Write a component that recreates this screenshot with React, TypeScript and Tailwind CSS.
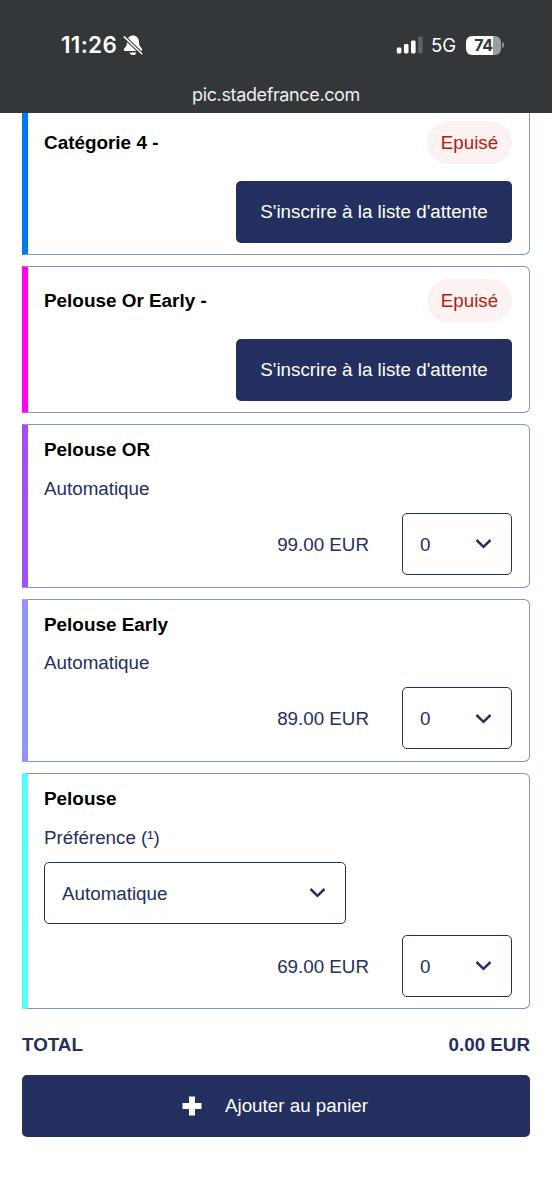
import type { ReactNode } from "react";

type SoldOutOffer = { name: string; bar: string };
type Offer = { name: string; bar: string; price: string; choice?: boolean };

const soldOut: SoldOutOffer[] = [
  { name: "Catégorie 4 -", bar: "border-l-[#0179ef]" },
  { name: "Pelouse Or Early -", bar: "border-l-[#ff00f2]" }
];

const offers: Offer[] = [
  { name: "Pelouse OR", bar: "border-l-[#a24ff2]", price: "99.00 EUR" },
  { name: "Pelouse Early", bar: "border-l-[#8f93fb]", price: "89.00 EUR" },
  { name: "Pelouse", bar: "border-l-[#54fdfb]", price: "69.00 EUR", choice: true }
];

function Chevron() {
  return (
    <svg width="17" height="11" viewBox="0 0 17 11" fill="none" stroke="#232f5e" strokeWidth="2.5">
      <path d="M1.5 2 8.5 8.8 15.5 2" />
    </svg>
  );
}

function SelectBox({ value, className }: { value: string; className: string }) {
  return (
    <button
      className={`flex h-[62px] items-center justify-between rounded-[5px] border border-[#232f5e] pl-[17px] pr-[19px] ${className}`}
    >
      <span className="pt-[2px]">{value}</span>
      <Chevron />
    </button>
  );
}

function Card({ bar, className, children }: { bar: string; className: string; children: ReactNode }) {
  return (
    <section className={`flex rounded-r-[6px] border border-[#8094c0] border-l-[6px] pl-4 pr-[17px] ${bar} ${className}`}>
      <div className="flex w-full flex-col">{children}</div>
    </section>
  );
}

function StatusBar() {
  return (
    <header className="relative z-10 flex h-[113px] flex-col bg-[#343739] font-[Inter,sans-serif] text-white">
      <div className="mt-[33px] flex h-6 items-center pl-[61px] pr-[48px]">
        <span className="w-[57px] whitespace-nowrap text-[22.5px] font-semibold leading-6 tracking-[0.3px]">11:26</span>
        <svg className="ml-[5px]" width="20" height="21" viewBox="0 0 20 21">
          <path
            fill="#fff"
            d="M10 .6C6.8.6 4.2 3 4 6.5L3.800 9.500C3.600 11.600.8 13 .8 14.800c0 .8.6 1.200 1.400 1.200h15.600c.8 0 1.400-.4 1.400-1.200 0-1.800-2.800-3.200-3-5.300L16 6.500C15.800 3 13.200.6 10 .6ZM6.600 17.400c.4 1.700 1.700 2.600 3.400 2.600s3-.9 3.400-2.600Z"
          />
          <path d="M.5 1.200 19.5 19.4" stroke="#343739" strokeWidth="3.6" />
          <path d="M1.200 1.900 18.800 18.700" stroke="#fff" strokeWidth="1.5" strokeLinecap="round" />
        </svg>
        <svg className="ml-auto" width="27" height="18" viewBox="0 0 27 18" fill="#fff">
          <rect x="0.8" y="11.5" width="4.6" height="6" rx="1.4" />
          <rect x="7.900" y="8" width="4.6" height="9.5" rx="1.4" />
          <rect x="15" y="4.5" width="4.6" height="13" rx="1.4" />
          <rect x="22.1" y="0.5" width="4.6" height="17" rx="1.4" opacity="0.22" />
        </svg>
        <span className="ml-[8px] w-[25px] whitespace-nowrap text-[18.5px] leading-6">5G</span>
        <div className="ml-[10px] flex items-center">
          <div className="flex h-[19px] w-[35px] items-center justify-center rounded-[6px] bg-[linear-gradient(90deg,#fff_76%,#9b9d9e_76%)] text-[16px] font-bold leading-none tracking-[-0.4px] text-[#343739]">
            74
          </div>
          <div className="ml-px h-[6px] w-[2px] rounded-r-full bg-[#8b8d8f]" />
        </div>
      </div>
      <p className="mt-[26px] text-center text-[18px] leading-6 tracking-[-0.37px] text-[#eeeeef]">
        pic.stadefrance.com
      </p>
    </header>
  );
}

export default function App() {
  return (
    <div className="h-[1200px] overflow-hidden bg-white font-['Liberation_Sans',Arial,sans-serif] text-[18.8px] leading-6 text-[#232f5e]">
      <StatusBar />
      <main className="-mt-[5px] flex flex-col px-[22px]">
        <div className="flex flex-col gap-[11px]">
          {soldOut.map((offer) => (
            <Card key={offer.name} bar={offer.bar} className="h-[147px]">
              <div className="mt-3 flex items-center justify-between">
                <h2 className="pt-px text-[18.9px] font-bold text-black">{offer.name}</h2>
                <span className="flex h-[43px] w-[85px] items-center justify-center rounded-full bg-[#fbf2f1] pt-px text-[#b31b10]">
                  Epuisé
                </span>
              </div>
              <button className="mt-[17px] h-[62px] w-[276px] self-end rounded-[5px] bg-[#232f5e] text-white">
                S'inscrire à la liste d'attente
              </button>
            </Card>
          ))}
          {offers.map((offer) => (
            <Card
              key={offer.name}
              bar={offer.bar}
              className={offer.choice ? "h-[236px]" : "h-[163.5px]"}
            >
              <h2 className="mt-[13px] text-[18.9px] font-bold text-black">{offer.name}</h2>
              <p className="mt-[14.5px]">{offer.choice ? "Préférence (¹)" : "Automatique"}</p>
              {offer.choice && <SelectBox value="Automatique" className="mt-3 w-[302px]" />}
              <div className={`flex items-center justify-end ${offer.choice ? "mt-[11px]" : "mt-3"}`}>
                <span className="pt-[2px]">{offer.price}</span>
                <SelectBox value="0" className="ml-[33px] w-[110px]" />
              </div>
            </Card>
          ))}
        </div>
        <div className="mt-6 flex justify-between font-bold">
          <span>TOTAL</span>
          <span>0.00 EUR</span>
        </div>
        <button className="mt-[18px] flex h-[62px] items-center justify-center rounded-[5px] bg-[#232f5e] pr-[2px] text-white">
          <svg width="20" height="20" viewBox="0 0 20 20" fill="#fff">
            <path d="M7 .5h6V7h6.500v6H13v6.500H7V13H.5V7H7Z" />
          </svg>
          <span className="ml-[23px]">Ajouter au panier</span>
        </button>
      </main>
    </div>
  );
}
